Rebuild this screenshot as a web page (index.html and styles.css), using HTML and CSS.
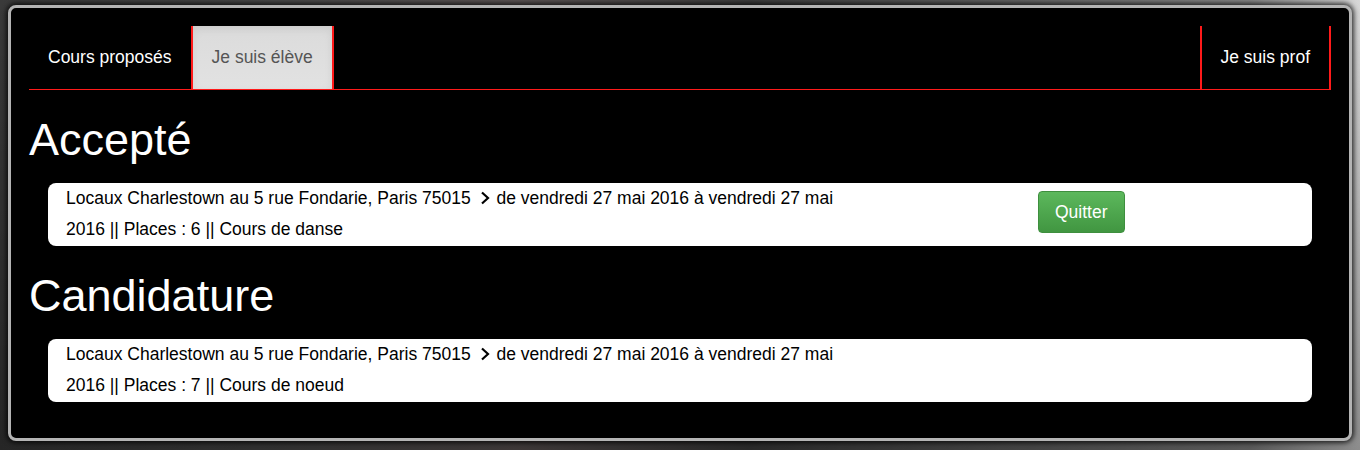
FILE: index.html
```html
<!DOCTYPE html>
<html lang="fr">
<head>
<meta charset="utf-8">
<title>Mes cours</title>
<link rel="stylesheet" href="styles.css">
</head>
<body>
<div class="panel">
  <nav class="tabs">
    <a class="tab">Cours proposés</a>
    <a class="tab tab-active">Je suis élève</a>
    <span class="tabs-spacer"></span>
    <a class="tab tab-bordered">Je suis prof</a>
  </nav>

  <h1 class="section-title">Accepté</h1>
  <div class="card">
    <p class="card-text">Locaux Charlestown au 5 rue Fondarie, Paris 75015 <svg class="chev" width="10" height="14" viewBox="0 0 10 14"><path d="M2 1.5 L8 7 L2 12.5" fill="none" stroke="#000" stroke-width="2.2"/></svg> de vendredi 27 mai 2016 à vendredi 27 mai 2016 || Places : 6 || Cours de danse</p>
    <button class="btn-quit">Quitter</button>
  </div>

  <h1 class="section-title">Candidature</h1>
  <div class="card">
    <p class="card-text">Locaux Charlestown au 5 rue Fondarie, Paris 75015 <svg class="chev" width="10" height="14" viewBox="0 0 10 14"><path d="M2 1.5 L8 7 L2 12.5" fill="none" stroke="#000" stroke-width="2.2"/></svg> de vendredi 27 mai 2016 à vendredi 27 mai 2016 || Places : 7 || Cours de noeud</p>
  </div>
</div>
</body>
</html>
```

FILE: styles.css
```css
html, body {
  margin: 0;
  padding: 0;
}
body {
  width: 1360px;
  height: 450px;
  overflow: hidden;
  font-family: "Liberation Sans", Arial, sans-serif;
  background:
    linear-gradient(180deg, rgba(0,0,0,0) 0, rgba(0,0,0,0.35) 100%),
    linear-gradient(90deg, #3a3a3a 0, #4a4a4a 20%, #5e5656 38%, #3f3f3f 55%, #666 75%, #8a8a8a 92%, #d8d8d8 100%);
  padding-top: 5px;
  box-sizing: border-box;
}
.panel {
  box-sizing: border-box;
  margin: 0 0 0 8px;
  width: 1344px;
  height: 436px;
  background: #000;
  border: 3px solid #b4b4b4;
  border-radius: 8px;
  box-shadow: 0 0 5px 2px rgba(0,0,0,0.75);
  padding: 18px 18px 0 18px;
}
.tabs {
  display: flex;
  border-bottom: 1px solid #ff1a1a;
  height: 63px;
}
.tab {
  display: block;
  font-size: 17.5px;
  line-height: 23px;
  padding: 20px 19px;
  color: #fff;
  text-decoration: none;
}
.tab-active {
  color: #555;
  border-left: 2px solid #ff1a1a;
  border-right: 2px solid #ff1a1a;
  background: linear-gradient(180deg, #dbdbdb 0, #e2e2e2 100%);
  box-shadow: inset 0 3px 8px rgba(0,0,0,0.075);
}
.tab-bordered {
  border-left: 2px solid #ff1a1a;
  border-right: 2px solid #ff1a1a;
}
.tabs-spacer {
  flex: 1;
}
.section-title {
  margin: 26px 0 19px;
  font-size: 45px;
  line-height: 48px;
  font-weight: normal;
  color: #fff;
}
.card {
  display: flex;
  align-items: flex-start;
  background: #fff;
  border-radius: 8px;
  margin: 0 19px;
  padding: 0 18px;
  height: 63px;
}
.card-text {
  margin: 0;
  width: 790px;
  font-size: 17.5px;
  line-height: 31px;
  color: #000;
}
.chev {
  display: inline-block;
  vertical-align: -1px;
  margin: 0 2px 0 4px;
}
.btn-quit {
  margin: 8px 0 0 182px;
  font-family: "Liberation Sans", Arial, sans-serif;
  font-size: 17.5px;
  line-height: 20px;
  padding: 10px 16px;
  color: #fff;
  background: linear-gradient(180deg, #5cb85c 0, #419641 100%);
  border: 1px solid #3e8f3e;
  border-radius: 4px;
  cursor: pointer;
}
```
